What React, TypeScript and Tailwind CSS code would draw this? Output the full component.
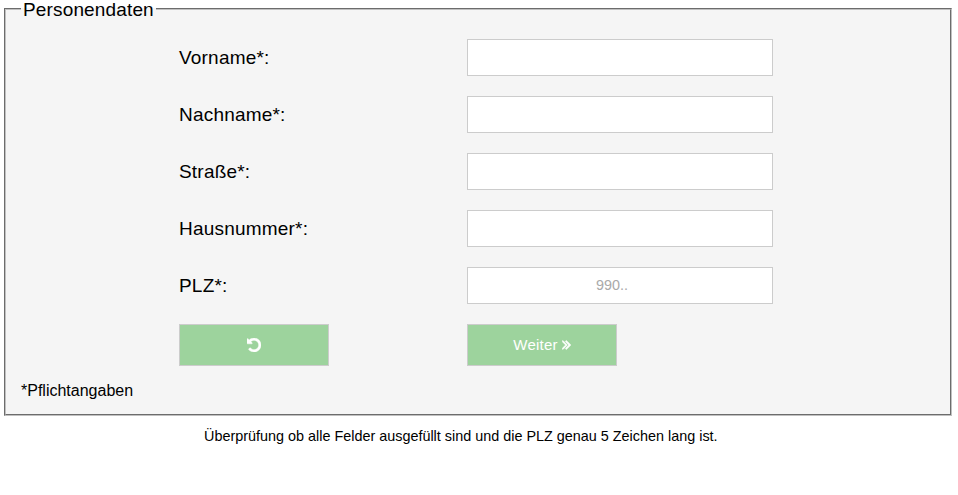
import React from "react";

const fields = [
  { id: "vorname", label: "Vorname*:", placeholder: "" },
  { id: "nachname", label: "Nachname*:", placeholder: "" },
  { id: "strasse", label: "Straße*:", placeholder: "" },
  { id: "hausnummer", label: "Hausnummer*:", placeholder: "" },
  { id: "plz", label: "PLZ*:", placeholder: "990.." },
];

function UndoIcon() {
  return (
    <svg className="h-3.5 w-3.5" viewBox="0 0 1536 1536" fill="currentColor" stroke="currentColor" strokeWidth="50" aria-hidden="true">
      <path d="M1536 768q0 156-61 298t-164 245-245 164-298 61q-172 0-327-72.5t-264-204.5q-7-10-6.5-22.5t8.5-20.5l137-138q10-9 25-9 16 2 23 12 73 95 179 147t225 52q104 0 198.5-40.5t163.5-109.5 109.5-163.5 40.5-198.5-40.5-198.5-109.5-163.5-163.5-109.5-198.5-40.5q-98 0-188 35.5t-160 101.5l137 138q31 30 14 69-17 40-59 40h-448q-26 0-45-19t-19-45v-448q0-42 40-59 39-17 69 14l130 129q107-101 244.5-156.5t284.5-55.5q156 0 298 61t245 164 164 245 61 298z" />
    </svg>
  );
}

function DoubleAngleIcon() {
  return (
    <svg className="h-4 w-[9px]" viewBox="0 64 1024 1792" fill="currentColor" stroke="currentColor" strokeWidth="90" aria-hidden="true">
      <path d="M595 960q0 13-10 23l-466 466q-10 10-23 10t-23-10l-50-50q-10-10-10-23t10-23l393-393-393-393q-10-10-10-23t10-23l50-50q10-10 23-10t23 10l466 466q10 10 10 23zm384 0q0 13-10 23l-466 466q-10 10-23 10t-23-10l-50-50q-10-10-10-23t10-23l393-393-393-393q-10-10-10-23t10-23l50-50q10-10 23-10t23 10l466 466q10 10 10 23z" />
    </svg>
  );
}

export default function App() {
  return (
    <main className="h-[495px] w-[958px] overflow-hidden bg-white font-['Liberation_Sans',Arial,sans-serif] text-black">
      <fieldset className="ml-1 h-[416px] w-[948px] border-2 [border-style:groove] border-[#c0c0c0] bg-[#f5f5f5] px-[15px]">
        <legend className="px-0.5 pt-px text-[19px] leading-[17px] tracking-[0.15px]">Personendaten</legend>
        <form>
          <div className="ml-[158px] mt-[21px] flex flex-col gap-5">
            {fields.map((f) => (
              <div key={f.id} className="flex h-[37px] items-center">
                <label htmlFor={f.id} className="w-72 pt-px text-[19px] leading-7 tracking-[0.2px]">{f.label}</label>
                <input id={f.id} placeholder={f.placeholder} className="h-[37px] w-[306px] border border-[#ccc] bg-white pb-0.5 pr-4 text-center text-[14.4px] placeholder:text-[#a9a9a9]" />
              </div>
            ))}
            <div className="flex gap-[138px]">
              <button type="reset" aria-label="Zurücksetzen" className="flex h-[42px] w-[150px] items-center justify-center border border-[#ccc] bg-[#9dd39d] text-white"><UndoIcon /></button>
              <button type="button" className="flex h-[42px] w-[150px] items-center justify-center gap-1 border border-[#ccc] bg-[#9dd39d] text-[15px] tracking-[0.2px] text-white">Weiter <DoubleAngleIcon /></button>
            </div>
          </div>
          <p className="mt-[13px] text-base">*Pflichtangaben</p>
        </form>
      </fieldset>
      <p className="ml-[204px] mt-2.5 whitespace-nowrap text-[14.4px] leading-5">Überprüfung ob alle Felder ausgefüllt sind und die PLZ genau 5 Zeichen lang ist.</p>
    </main>
  );
}
